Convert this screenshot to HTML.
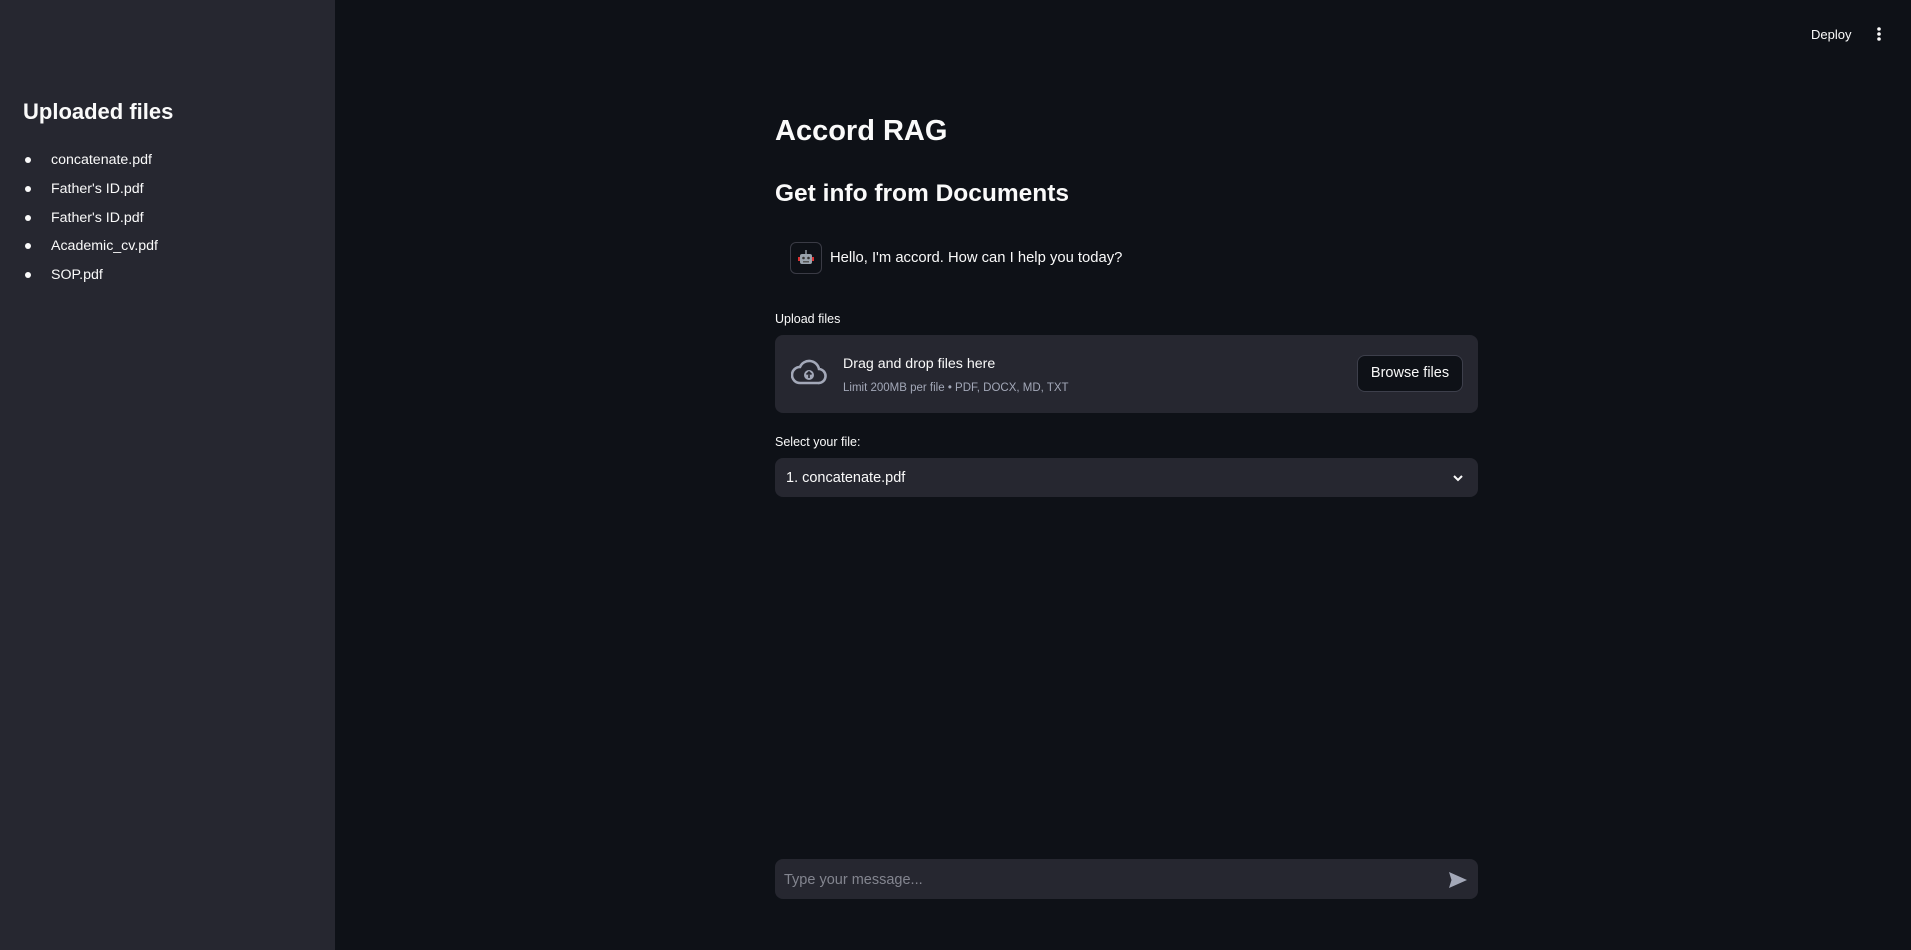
<!DOCTYPE html>
<html><head><meta charset="utf-8"><style>
*{box-sizing:border-box;margin:0;padding:0}
body{width:1911px;height:950px;background:#0e1117;font-family:"Liberation Sans",sans-serif;color:#fafafa;position:relative;overflow:hidden}
.side{position:absolute;left:0;top:0;width:335px;height:950px;background:#262730}
.abs{position:absolute;white-space:nowrap}
.side h2{position:absolute;left:23px;top:99px;font-size:22px;font-weight:bold}
.side ul{position:absolute;left:23px;top:150px;list-style:none}
.side li{height:28.8px;font-size:14.2px;line-height:20px;position:relative;padding-left:28px}
.side li:before{content:"";position:absolute;left:2px;top:7px;width:6px;height:6px;border-radius:50%;background:#fafafa}
.box{position:absolute;left:775px;width:703px;background:#262730;border-radius:8px}
</style></head><body>
<div class="side">
<h2>Uploaded files</h2>
<ul><li>concatenate.pdf</li><li>Father's ID.pdf</li><li>Father's ID.pdf</li><li>Academic_cv.pdf</li><li>SOP.pdf</li></ul>
</div>
<div class="abs" style="left:1811px;top:27px;font-size:13px">Deploy</div>
<svg class="abs" style="left:1875px;top:26px" width="8" height="16"><circle cx="4" cy="3" r="1.8" fill="#fafafa"/><circle cx="4" cy="8" r="1.8" fill="#fafafa"/><circle cx="4" cy="13" r="1.8" fill="#fafafa"/></svg>
<div class="abs" style="left:775px;top:115px;font-size:29px;font-weight:bold">Accord RAG</div>
<div class="abs" style="left:775px;top:180px;font-size:24.5px;font-weight:bold">Get info from Documents</div>
<div class="abs" style="left:790px;top:242px;width:32px;height:32px;border:1px solid #3a3b45;border-radius:6px;background:#0e1117"><svg width="30" height="30" viewBox="0 0 30 30"><rect x="9" y="11" width="12" height="10" rx="2" fill="#9aa3ad"/><rect x="7" y="14" width="2" height="4" fill="#d33"/><rect x="21" y="14" width="2" height="4" fill="#d33"/><circle cx="12.5" cy="15" r="1.3" fill="#333"/><circle cx="17.5" cy="15" r="1.3" fill="#333"/><rect x="14.3" y="7" width="1.4" height="4" fill="#9aa3ad"/><rect x="12" y="18" width="6" height="1.5" fill="#555"/></svg></div>
<div class="abs" style="left:830px;top:250px;font-size:14.8px">Hello, I'm accord. How can I help you today?</div>
<div class="abs" style="left:775px;top:312px;font-size:12.5px">Upload files</div>
<div class="box" style="top:335px;height:78px">
<svg class="abs" style="left:16px;top:22px" width="36" height="30" viewBox="0 0 36 30"><path d="M9 26 H27 A7 7 0 0 0 28 12 A10 10 0 0 0 9 10 A8 8 0 0 0 9 26 Z" fill="none" stroke="#a3a8b8" stroke-width="2.6"/><circle cx="18" cy="18" r="5" fill="#a3a8b8"/><path d="M18 21 V15 M15.5 17.5 L18 15 L20.5 17.5" stroke="#262730" stroke-width="1.6" fill="none"/></svg>
<div class="abs" style="left:68px;top:21px;font-size:14.2px">Drag and drop files here</div>
<div class="abs" style="left:68px;top:47px;font-size:11.5px;color:#a3a8b8">Limit 200MB per file • PDF, DOCX, MD, TXT</div>
<div class="abs" style="left:582px;top:20px;width:106px;height:37px;border:1px solid #3d3f4b;border-radius:8px;background:#0e1117;font-size:14.5px;line-height:35px;text-align:center">Browse files</div>
</div>
<div class="abs" style="left:775px;top:435px;font-size:12.5px">Select your file:</div>
<div class="box" style="top:458px;height:39px">
<div class="abs" style="left:11px;top:12px;font-size:14.5px">1. concatenate.pdf</div>
<svg class="abs" style="left:677px;top:15px" width="12" height="10"><path d="M2 3 L6 7 L10 3" stroke="#fafafa" stroke-width="2" fill="none"/></svg>
</div>
<div class="box" style="top:859px;height:40px">
<div class="abs" style="left:9px;top:13px;font-size:14.5px;color:#83858f">Type your message...</div>
<svg class="abs" style="left:673px;top:12px" width="20" height="18" viewBox="0 0 20 18"><path d="M1 1 L19 9 L1 17 L3.5 9 Z" fill="#a3a8b8"/></svg>
</div>
</body></html>
